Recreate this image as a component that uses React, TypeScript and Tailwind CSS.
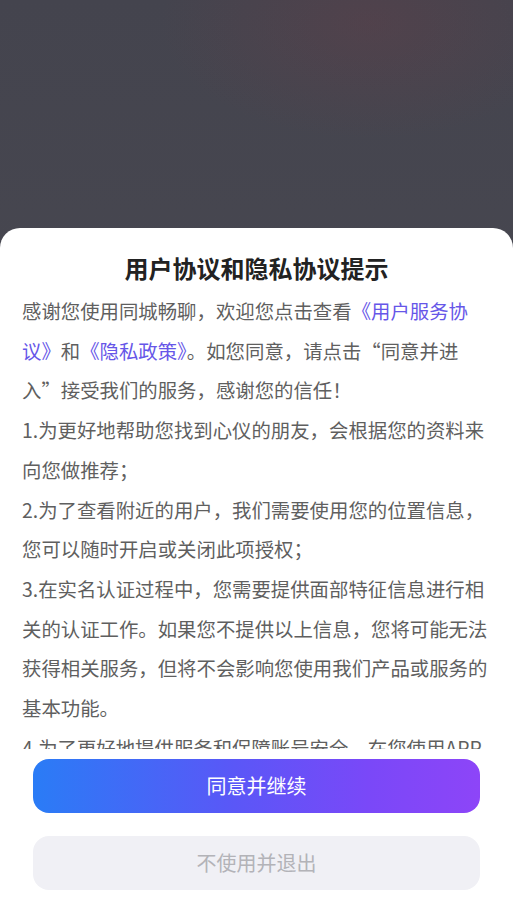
const Link = ({ children }: { children: React.ReactNode }) => (
  <span className="text-[#6656e8]">{children}</span>
);

const bodyLines: React.ReactNode[] = [
  <>
    感谢您使用同城畅聊，欢迎您点击查看<Link>《用户服务协</Link>
  </>,
  <>
    <Link>议》</Link>和<Link>《隐私政策》</Link>。如您同意，请点击“同意并进
  </>,
  <>入”接受我们的服务，感谢您的信任！</>,
  <>1.为更好地帮助您找到心仪的朋友，会根据您的资料来</>,
  <>向您做推荐；</>,
  <>2.为了查看附近的用户，我们需要使用您的位置信息，</>,
  <>您可以随时开启或关闭此项授权；</>,
  <>3.在实名认证过程中，您需要提供面部特征信息进行相</>,
  <>关的认证工作。如果您不提供以上信息，您将可能无法</>,
  <>获得相关服务，但将不会影响您使用我们产品或服务的</>,
  <>基本功能。</>,
  <>4.为了更好地提供服务和保障账号安全，在您使用APP</>,
  <>时，我们会收集您的设备信息用于风控与安全保障；</>,
];

export default function App() {
  return (
    <div
      className="w-[513px] h-[912px] flex flex-col overflow-hidden bg-[linear-gradient(180deg,#44444e_0%,#474750_35%,#4d4d4d_70%,#4d4d4d_100%)]"
      style={{ fontFamily: '"Noto Sans CJK SC", "Noto Sans", sans-serif' }}
    >
      {/* dimmed backdrop */}
      <div className="h-[228px] shrink-0 bg-[radial-gradient(ellipse_at_72%_10%,rgba(110,60,70,0.3)_0%,rgba(110,60,70,0)_40%)]" />

      {/* bottom sheet */}
      <div className="flex-1 bg-white rounded-t-[20px] flex flex-col pt-[22px]">
        <h1 className="text-center text-[24px] leading-[36px] font-bold text-[#222222]">
          用户协议和隐私协议提示
        </h1>

        <div className="mt-[5px] h-[458px] overflow-hidden px-[22px] text-[19.4px] leading-[39.7px] text-[#5f5f5f]">
          {bodyLines.map((l, i) => (
            <div key={i} className="whitespace-nowrap">
              {l}
            </div>
          ))}
        </div>

        <div className="flex flex-col gap-[23px] px-[33px] mt-[10px]">
          <button className="h-[54px] rounded-[16px] bg-[linear-gradient(90deg,#2a7cf6_0%,#5a57f7_45%,#7a48f8_75%,#8d45f8_100%)] text-white text-[20px]">
            同意并继续
          </button>
          <button className="h-[54px] rounded-[16px] bg-[#f0f0f5] text-[#b3b3b8] text-[20px]">
            不使用并退出
          </button>
        </div>
      </div>
    </div>
  );
}
